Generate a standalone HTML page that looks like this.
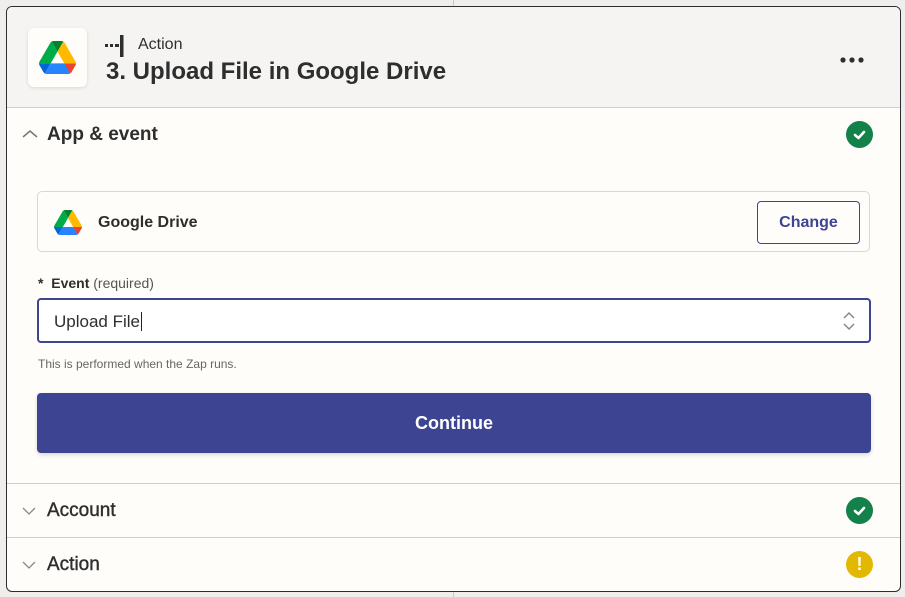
<!DOCTYPE html>
<html><head><style>
*{box-sizing:border-box;margin:0;padding:0}
body{width:905px;height:597px;background:#efeeec;font-family:"Liberation Sans",sans-serif;position:relative;overflow:hidden;color:#2d2e2e}
.vl{position:absolute;left:453px;width:1px;background:#c8c8c8}
.card{position:absolute;left:6px;top:6px;width:895px;height:586px;border:1px solid #2d2e2e;border-radius:6px;background:#fffdf9;overflow:hidden}
.hdr{height:101px;background:#f5f4f2;border-bottom:1px solid #cfcfcf;position:relative}
.logo{position:absolute;left:21px;top:21px;width:59px;height:59px;background:#fffdf9;border-radius:6px;box-shadow:0 1px 3px rgba(0,0,0,.12)}
.abs{position:absolute}
.sec{position:absolute;left:0;width:100%;border-top:1px solid #cfcfcf}
.ttl{font-size:19px;font-weight:bold;position:absolute;left:40px}
.chev{position:absolute;left:15px}
.ok{position:absolute;width:27px;height:27px;border-radius:50%;background:#13814a}
</style></head><body>
<div class="vl" style="top:0;height:6px"></div>
<div class="vl" style="top:592px;height:5px"></div>
<div class="card">
 <div class="hdr">
  <div class="logo"><svg class="abs" style="left:11px;top:13px" width="37" height="33" viewBox="0 0 87.3 78"><path d="m6.6 66.85 3.850 6.65c.8 1.4 1.95 2.5 3.3 3.3l13.75-23.8h-27.5c0 1.55.4 3.1 1.2 4.5z" fill="#0066da"/><path d="m43.65 25-13.75-23.8c-1.35.8-2.5 1.9-3.3 3.3l-25.4 44a9.06 9.06 0 0 0 -1.2 4.5h27.5z" fill="#00ac47"/><path d="m73.55 76.8c1.35-.8 2.5-1.9 3.3-3.3l1.6-2.75 7.65-13.25c.8-1.4 1.2-2.95 1.2-4.5h-27.502l5.852 11.5z" fill="#ea4335"/><path d="m43.65 25 13.75-23.8c-1.35-.8-2.9-1.2-4.5-1.2h-18.5c-1.6 0-3.15.45-4.5 1.2z" fill="#00832d"/><path d="m59.8 53h-32.3l-13.75 23.8c1.35.8 2.9 1.2 4.5 1.2h50.8c1.6 0 3.15-.45 4.5-1.2z" fill="#2684fc"/><path d="m73.4 26.5-12.7-22c-.8-1.4-1.95-2.5-3.3-3.3l-13.75 23.8 16.15 28h27.45c0-1.55-.4-3.1-1.2-4.5z" fill="#ffba00"/></svg></div>
  <svg class="abs" style="left:98px;top:27px" width="22" height="24"><rect x="0" y="10" width="3" height="3" fill="#2d2e2e"/><rect x="5" y="10" width="3" height="3" fill="#2d2e2e"/><rect x="10" y="10" width="4" height="3" fill="#2d2e2e"/><rect x="15" y="1" width="3.5" height="22" fill="#2d2e2e"/></svg>
  <div class="abs" style="left:131px;top:29px;font-size:16px">Action</div>
  <div class="abs" style="left:99px;top:51px;font-size:24px;font-weight:bold">3. Upload File in Google Drive</div>
  <svg class="abs" style="left:832px;top:49px" width="26" height="8"><circle cx="4" cy="4" r="2.6" fill="#2d2e2e"/><circle cx="13" cy="4" r="2.6" fill="#2d2e2e"/><circle cx="22" cy="4" r="2.6" fill="#2d2e2e"/></svg>
 </div>
 <svg class="chev" style="top:122px" width="16" height="10"><path d="M1 8 L8 2 L15 8" stroke="#777" stroke-width="1.5" fill="none"/></svg>
 <div class="ttl" style="top:117px">App &amp; event</div>
 <div class="ok" style="left:839px;top:114px"><svg width="27" height="27"><path d="M9 14 L12.5 17 L18 11" stroke="#fff" stroke-width="2.6" fill="none" stroke-linecap="round" stroke-linejoin="round"/></svg></div>
 <div class="abs" style="left:30px;top:184px;width:833px;height:61px;border:1px solid #d8d8d8;border-radius:5px"></div>
 <svg class="abs" style="left:47px;top:203px" width="28" height="25" viewBox="0 0 87.3 78"><path d="m6.6 66.85 3.85 6.65c.8 1.4 1.95 2.5 3.3 3.3l13.75-23.8h-27.5c0 1.55.4 3.1 1.2 4.5z" fill="#0066da"/><path d="m43.65 25-13.75-23.8c-1.35.8-2.5 1.9-3.3 3.3l-25.4 44a9.06 9.06 0 0 0 -1.2 4.5h27.5z" fill="#00ac47"/><path d="m73.55 76.8c1.35-.8 2.5-1.9 3.3-3.3l1.6-2.75 7.65-13.25c.8-1.4 1.2-2.95 1.2-4.5h-27.502l5.852 11.5z" fill="#ea4335"/><path d="m43.65 25 13.75-23.8c-1.35-.8-2.9-1.2-4.5-1.2h-18.5c-1.6 0-3.15.45-4.5 1.2z" fill="#00832d"/><path d="m59.8 53h-32.3l-13.75 23.8c1.35.8 2.9 1.2 4.5 1.2h50.8c1.6 0 3.15-.45 4.5-1.2z" fill="#2684fc"/><path d="m73.4 26.5-12.7-22c-.8-1.4-1.95-2.5-3.3-3.3l-13.75 23.8 16.15 28h27.45c0-1.55-.4-3.1-1.2-4.5z" fill="#ffba00"/></svg>
 <div class="abs" style="left:91px;top:207px;font-size:16px;font-weight:bold">Google Drive</div>
 <div class="abs" style="left:750px;top:194px;width:103px;height:43px;border:1px solid #3d4592;border-radius:4px;color:#3d4592;font-weight:bold;font-size:16px;text-align:center;line-height:41px">Change</div>
 <div class="abs" style="left:31px;top:268px;font-size:14px"><b>*&nbsp; Event</b> <span style="color:#555">(required)</span></div>
 <div class="abs" style="left:30px;top:291px;width:834px;height:45px;border:2px solid #3d4592;border-radius:4px;background:#fff"></div>
 <div class="abs" style="left:47px;top:305px;font-size:17px">Upload File<span style="border-left:1px solid #222;margin-left:1px"></span></div>
 <svg class="abs" style="left:835px;top:304px" width="14" height="20"><path d="M2 7 L7 2 L12 7 M2 13 L7 18 L12 13" stroke="#888" stroke-width="1.5" fill="none"/></svg>
 <div class="abs" style="left:31px;top:350px;font-size:12px;color:#666">This is performed when the Zap runs.</div>
 <div class="abs" style="left:30px;top:386px;width:834px;height:60px;background:#3d4592;border-radius:4px;color:#fff;font-weight:bold;font-size:18px;text-align:center;line-height:60px;box-shadow:0 2px 4px rgba(0,0,0,.15)">Continue</div>
 <div class="sec" style="top:476px;height:54px">
  <svg class="chev" style="top:22px" width="14" height="10"><path d="M1 2 L7 8 L13 2" stroke="#888" stroke-width="1.3" fill="none"/></svg>
  <div class="ttl" style="top:16px;font-weight:normal;font-size:19px;-webkit-text-stroke:.4px #2d2e2e">Account</div>
  <div class="ok" style="left:839px;top:13px"><svg width="27" height="27"><path d="M9 14 L12.5 17 L18 11" stroke="#fff" stroke-width="2.6" fill="none" stroke-linecap="round" stroke-linejoin="round"/></svg></div>
 </div>
 <div class="sec" style="top:530px;height:56px">
  <svg class="chev" style="top:22px" width="14" height="10"><path d="M1 2 L7 8 L13 2" stroke="#888" stroke-width="1.3" fill="none"/></svg>
  <div class="ttl" style="top:16px;font-weight:normal;font-size:19px;-webkit-text-stroke:.4px #2d2e2e">Action</div>
  <div class="ok" style="left:839px;top:13px;background:#e2b900;color:#fff;text-align:center;font-weight:bold;font-size:18px;line-height:27px">!</div>
 </div>
</div>
</body></html>
